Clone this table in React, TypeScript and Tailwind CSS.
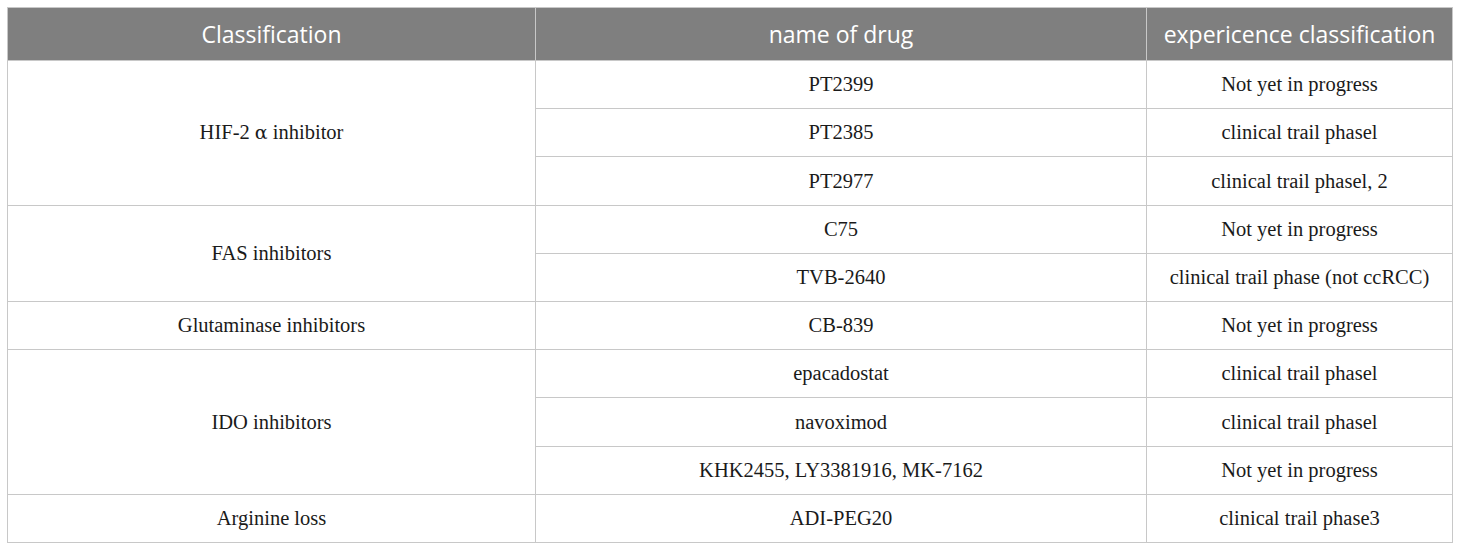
type Row = { group?: { label: React.ReactNode; span: number }; drug: string; status: string }

const rows: Row[] = [
  { group: { label: <>HIF-2 <span className="font-['DejaVu_Serif',serif] text-[19px]">α</span> inhibitor</>, span: 3 }, drug: 'PT2399', status: 'Not yet in progress' },
  { drug: 'PT2385', status: 'clinical trail phasel' },
  { drug: 'PT2977', status: 'clinical trail phasel, 2' },
  { group: { label: 'FAS inhibitors', span: 2 }, drug: 'C75', status: 'Not yet in progress' },
  { drug: 'TVB-2640', status: 'clinical trail phase (not ccRCC)' },
  { group: { label: 'Glutaminase inhibitors', span: 1 }, drug: 'CB-839', status: 'Not yet in progress' },
  { group: { label: 'IDO inhibitors', span: 3 }, drug: 'epacadostat', status: 'clinical trail phasel' },
  { drug: 'navoximod', status: 'clinical trail phasel' },
  { drug: 'KHK2455, LY3381916, MK-7162', status: 'Not yet in progress' },
  { group: { label: 'Arginine loss', span: 1 }, drug: 'ADI-PEG20', status: 'clinical trail phase3' },
]

export default function App() {
  return (
    <div className="bg-white w-[1460px] h-[550px] pt-[7px] pl-[7px]">
      <table className="w-[1445px] border-collapse table-fixed text-[#1a1a1a]">
        <colgroup>
          <col className="w-[528px]" />
          <col className="w-[611px]" />
          <col className="w-[306px]" />
        </colgroup>
        <thead className="bg-[#7f7f7f] text-white font-['Open_Sans',sans-serif] text-[23px]">
          <tr className="h-[53px]">
            <th className="font-normal border border-[#c8c8c8]">Classification</th>
            <th className="font-normal border border-[#c8c8c8]">name of drug</th>
            <th className="font-normal border border-[#c8c8c8]">expericence classification</th>
          </tr>
        </thead>
        <tbody className="font-['Liberation_Serif',serif] text-[20.5px]">
          {rows.map((r, i) => (
            <tr key={i} className="h-[48.2px]">
              {r.group && (
                <td rowSpan={r.group.span} className="text-center border border-[#c8c8c8]">
                  {r.group.label}
                </td>
              )}
              <td className="text-center border border-[#c8c8c8]">{r.drug}</td>
              <td className="text-center border border-[#c8c8c8]">{r.status}</td>
            </tr>
          ))}
        </tbody>
      </table>
    </div>
  )
}
